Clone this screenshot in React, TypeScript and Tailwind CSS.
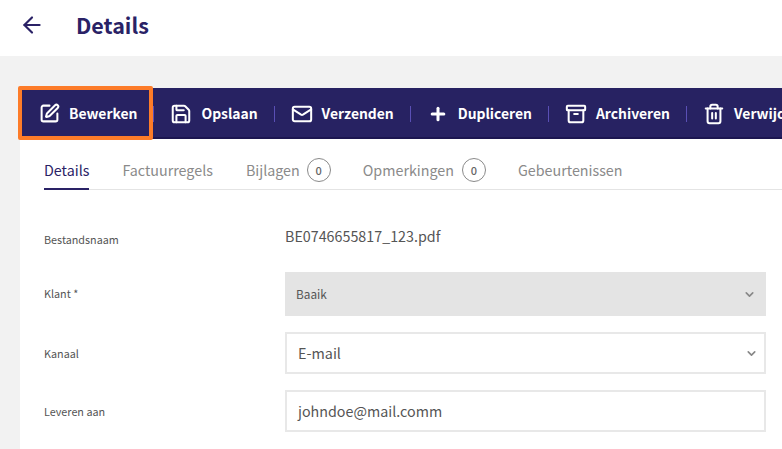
import React from "react";
import { ArrowLeft, SquarePen, Save, Mail, Plus, Archive, Trash2, ChevronDown } from "lucide-react";

function Sep() {
  return <div className="w-px h-4 bg-[#5a4fb5] shrink-0" />;
}

function ToolItem({ icon, label }: { icon: React.ReactNode; label: string }) {
  return (
    <div className="flex items-center gap-2 pl-[15px] pr-4 shrink-0">
      <span className="w-6 h-6 flex items-center justify-center shrink-0">{icon}</span>
      <span className="text-[13.9px] font-bold text-white whitespace-nowrap">{label}</span>
    </div>
  );
}

function Badge({ className }: { className: string }) {
  return (
    <span className={`w-6 h-6 rounded-full border border-[#8a8a8a] flex items-center justify-center text-[11px] font-medium text-[#666] ${className}`}>0</span>
  );
}

function Row({ label, className, labelClass, children }: { label: string; className: string; labelClass?: string; children: React.ReactNode }) {
  return (
    <div className={`flex items-center ${className}`}>
      <div className={`w-[241px] shrink-0 text-[10.8px] text-[#555] ${labelClass ?? ""}`}>{label}</div>
      <div className="flex-1">{children}</div>
    </div>
  );
}

export default function App() {
  return (
    <div className="w-[782px] h-[449px] overflow-hidden bg-[#f2f2f2] flex flex-col font-['Noto_Sans_CJK_SC',sans-serif]">
      <header className="h-[56px] bg-white flex items-start pt-[12px] pl-[19px] shrink-0">
        <ArrowLeft size={26} strokeWidth={2} className="text-[#2a2266]" />
        <h1 className="ml-[31px] mt-[-1px] text-[21.5px] font-bold text-[#2a2266] leading-[28px]">Details</h1>
      </header>
      <main className="mt-8 ml-5 flex-1 flex flex-col min-h-0">
        <div className="h-[51px] bg-[#272262] border-b-2 border-[#1c1650] flex items-center shrink-0 relative whitespace-nowrap pt-[2px] pl-[2px]">
          <div className="absolute left-[-2px] top-[-2px] w-[135px] h-[54px] border-4 border-[#fd7c29] rounded-[2px]" />
          <ToolItem icon={<SquarePen size={21} strokeWidth={2.3} className="text-white" />} label="Bewerken" />
          <Sep />
          <ToolItem icon={<Save size={22} strokeWidth={2.2} className="text-white" />} label="Opslaan" />
          <Sep />
          <ToolItem icon={<Mail size={22} strokeWidth={2.2} className="text-white" />} label="Verzenden" />
          <Sep />
          <ToolItem icon={<Plus size={20} strokeWidth={3.6} className="text-white" />} label="Dupliceren" />
          <Sep />
          <ToolItem icon={<Archive size={22} strokeWidth={2.2} className="text-white" />} label="Archiveren" />
          <Sep />
          <ToolItem icon={<Trash2 size={22} strokeWidth={2.2} className="text-white" />} label="Verwijderen" />
        </div>
        <div className="flex-1 bg-white pl-6 pr-4">
          <nav className="h-[51px] -mr-4 border-b border-[#e4e4e4] flex items-center text-[14.3px] text-[#8a8a8a] pt-[12px]">
            <div className="h-full flex items-center text-[#2a2266] border-b-2 border-[#2a2266] -mb-px">Details</div>
            <span className="ml-[33px]">Factuurregels</span>
            <span className="ml-[33px]">Bijlagen</span>
            <Badge className="ml-[7px]" />
            <span className="ml-8">Opmerkingen</span>
            <Badge className="ml-2" />
            <span className="ml-8">Gebeurtenissen</span>
          </nav>
          <div className="flex flex-col">
            <Row label="Bestandsnaam" className="mt-[29px] h-[40px] !items-start" labelClass="pt-[12px]">
              <div className="text-[14.3px] text-[#555] mt-[6px]">BE0746655817_123.pdf</div>
            </Row>
            <Row label="Klant *" className="mt-[13px]" labelClass="-mt-[2px]">
              <div className="h-[44px] bg-[#e4e4e4] flex items-center justify-between pl-[11px] pr-[10px] text-[11.8px] text-[#555]">
                <span className="-mt-[1px]">Baaik</span>
                <ChevronDown size={13} strokeWidth={3} className="text-[#888]" />
              </div>
            </Row>
            <Row label="Kanaal" className="mt-4">
              <div className="h-[42px] border-2 border-[#e8e8e8] bg-white flex items-center justify-between pl-[11px] pr-[6px] text-[14.4px] text-[#555]">
                E-mail
                <ChevronDown size={13} strokeWidth={3} className="text-[#888]" />
              </div>
            </Row>
            <Row label="Leveren aan" className="mt-4">
              <div className="h-[42px] border-2 border-[#e8e8e8] bg-white flex items-center pl-[11px] text-[14.3px] text-[#555]">
                johndoe@mail.comm
              </div>
            </Row>
          </div>
        </div>
      </main>
    </div>
  );
}
